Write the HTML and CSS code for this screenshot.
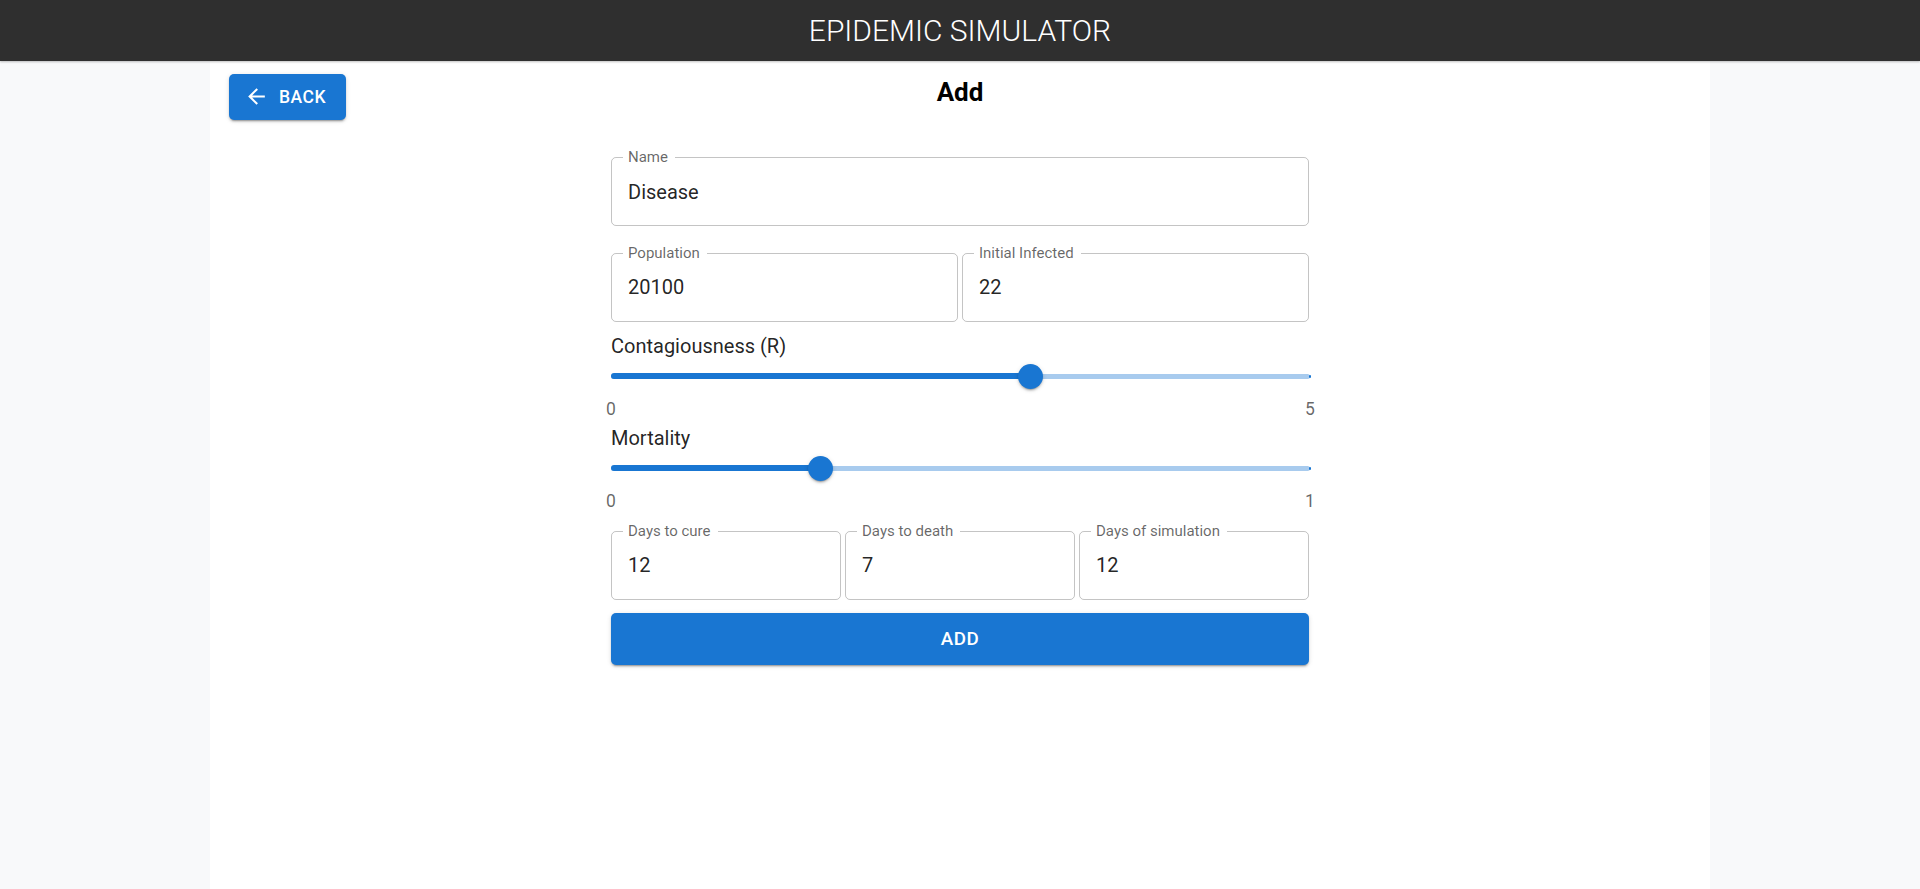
FILE: index.html
```html
<!DOCTYPE html>
<html lang="en">
<head>
<meta charset="utf-8">
<title>Epidemic Simulator</title>
<link rel="stylesheet" href="styles.css">
</head>
<body>
<header class="appbar">
  <h1 class="app-title">EPIDEMIC SIMULATOR</h1>
</header>
<main class="page">
  <div class="top-row">
    <button class="btn btn-back" type="button">
      <svg class="btn-icon" viewBox="0 0 24 24" aria-hidden="true"><path d="M20 11H7.83l5.59-5.59L12 4l-8 8 8 8 1.41-1.41L7.83 13H20v-2z"/></svg>
      <span>Back</span>
    </button>
    <h2 class="page-title">Add</h2>
  </div>

  <form class="form">
    <div class="field">
      <label class="field-label">Name</label>
      <input class="field-input" type="text" value="Disease">
    </div>

    <div class="row row-2">
      <div class="field">
        <label class="field-label">Population</label>
        <input class="field-input" type="text" value="20100">
      </div>
      <div class="field">
        <label class="field-label">Initial Infected</label>
        <input class="field-input" type="text" value="22">
      </div>
    </div>

    <div class="slider-label">Contagiousness (R)</div>
    <div class="slider">
      <span class="rail"></span>
      <span class="track" style="width:60%"></span>
      <span class="mark mark-end"></span>
      <span class="thumb" style="left:60%"></span>
      <span class="mark-label mark-label-start">0</span>
      <span class="mark-label mark-label-end">5</span>
    </div>

    <div class="slider-label">Mortality</div>
    <div class="slider">
      <span class="rail"></span>
      <span class="track" style="width:30%"></span>
      <span class="mark mark-end"></span>
      <span class="thumb" style="left:30%"></span>
      <span class="mark-label mark-label-start">0</span>
      <span class="mark-label mark-label-end">1</span>
    </div>

    <div class="row row-3">
      <div class="field">
        <label class="field-label">Days to cure</label>
        <input class="field-input" type="text" value="12">
      </div>
      <div class="field">
        <label class="field-label">Days to death</label>
        <input class="field-input" type="text" value="7">
      </div>
      <div class="field">
        <label class="field-label">Days of simulation</label>
        <input class="field-input" type="text" value="12">
      </div>
    </div>

    <button class="btn btn-submit" type="button">Add</button>
  </form>
</main>
</body>
</html>
```

FILE: styles.css
```css
* {
  box-sizing: border-box;
}

body {
  margin: 0;
  background: #f8f9fa;
  font-family: Roboto, "Noto Sans", "Liberation Sans", sans-serif;
  color: rgba(0, 0, 0, 0.87);
}

.appbar {
  position: relative;
  z-index: 1;
  height: 61px;
  background: #2f2f2f;
  display: flex;
  align-items: center;
  justify-content: center;
  box-shadow: 0 1px 2px rgba(0, 0, 0, 0.25);
}

.app-title {
  margin: 0;
  font-size: 30px;
  font-weight: 300;
  line-height: 1;
  color: #ffffff;
}

.page {
  width: 1500px;
  margin: 0 auto;
  min-height: calc(100vh - 61px);
  background: #ffffff;
  padding: 13px 19px 40px;
}

.top-row {
  display: grid;
  grid-template-columns: 1fr auto 1fr;
  align-items: start;
}

.page-title {
  grid-column: 2;
  margin: 2.5px 0 0;
  font-size: 26px;
  font-weight: 700;
  line-height: 1.2;
  color: #000000;
}

/* Buttons */
.btn {
  display: inline-flex;
  align-items: center;
  justify-content: center;
  border: 0;
  border-radius: 5px;
  background: #1976d2;
  color: #ffffff;
  font-family: Roboto, "Noto Sans", "Liberation Sans", sans-serif;
  font-weight: 500;
  text-transform: uppercase;
  letter-spacing: 0.02857em;
  cursor: pointer;
  box-shadow: 0 3px 1px -2px rgba(0, 0, 0, 0.2),
              0 2px 2px 0 rgba(0, 0, 0, 0.14),
              0 1px 5px 0 rgba(0, 0, 0, 0.12);
}

.btn-back {
  grid-column: 1;
  justify-self: start;
  padding: 7.5px 20px;
  font-size: 17.5px;
  line-height: 1.75;
}

.btn-icon {
  width: 25px;
  height: 25px;
  margin-left: -5px;
  margin-right: 10px;
  fill: currentColor;
  flex: none;
}

.btn-submit {
  width: 100%;
  margin-top: 13px;
  padding: 10px 27.5px;
  font-size: 18.75px;
  line-height: 1.75;
}

/* Form */
.form {
  width: 698px;
  margin: 37.5px auto 0;
  display: flex;
  flex-direction: column;
}

.row {
  display: grid;
  gap: 4px;
}

.row-2 {
  margin-top: 26.5px;
  grid-template-columns: 1fr 1fr;
}

.row-3 {
  margin-top: 15.5px;
  grid-template-columns: 1fr 1fr 1fr;
}

.field {
  position: relative;
  height: 69px;
  border: 1px solid rgba(0, 0, 0, 0.23);
  border-radius: 5px;
}

.field-label {
  position: absolute;
  top: -8px;
  left: 11px;
  padding: 0 7px 0 5px;
  background: #ffffff;
  font-size: 15px;
  line-height: 15px;
  color: rgba(0, 0, 0, 0.6);
  white-space: nowrap;
}

.field-input {
  display: block;
  width: 100%;
  height: 100%;
  border: 0;
  border-radius: 5px;
  padding: 0 16px;
  background: transparent;
  outline: none;
  font-family: Roboto, "Noto Sans", "Liberation Sans", sans-serif;
  font-size: 20px;
  font-weight: 400;
  color: rgba(0, 0, 0, 0.87);
}

/* Sliders */
.slider-label {
  margin-top: 9.5px;
  font-size: 20px;
  line-height: 30px;
  color: rgba(0, 0, 0, 0.87);
}

.slider-label + .slider + .slider-label {
  margin-top: 0;
}

.slider {
  position: relative;
  height: 62px;
  margin-right: -1px;
}

.rail {
  position: absolute;
  left: 0;
  right: 0;
  top: 12.7px;
  height: 5px;
  border-radius: 3px;
  background: #1976d2;
  opacity: 0.38;
}

.track {
  position: absolute;
  left: 0;
  top: 12.2px;
  height: 6px;
  border-radius: 3px;
  background: #1976d2;
}

.mark {
  position: absolute;
  top: 15.2px;
  width: 2.5px;
  height: 2.5px;
  margin: -1.25px 0 0 -1.25px;
  border-radius: 1px;
  background: #1976d2;
}

.mark-end {
  left: 100%;
}

.thumb {
  position: absolute;
  top: 15.2px;
  width: 25px;
  height: 25px;
  margin: -12.5px 0 0 -12.5px;
  border-radius: 50%;
  background: #1976d2;
  box-shadow: 0 3px 1px -2px rgba(0, 0, 0, 0.2),
              0 2px 2px 0 rgba(0, 0, 0, 0.14),
              0 1px 5px 0 rgba(0, 0, 0, 0.12);
}

.mark-label {
  position: absolute;
  top: 36px;
  transform: translateX(-50%);
  font-size: 17.5px;
  line-height: 25px;
  color: rgba(0, 0, 0, 0.6);
}

.mark-label-start {
  left: 0;
}

.mark-label-end {
  left: 100%;
}
```
